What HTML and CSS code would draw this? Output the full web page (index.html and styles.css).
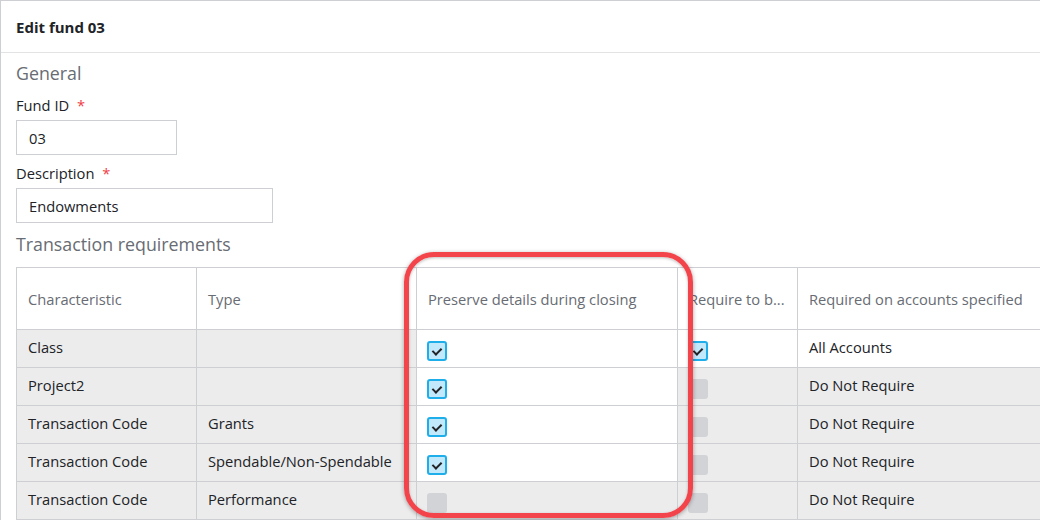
FILE: index.html
```html
<!DOCTYPE html>
<html lang="en">
<head>
  <meta charset="UTF-8">
  <title>Edit fund 03</title>
  <link rel="stylesheet" href="styles.css">
</head>
<body>
  <div class="modal">
    <div class="modal-header">Edit fund 03</div>
    <div class="modal-body">
      <h2 class="section-title first">General</h2>
      <label class="field-label">Fund ID <span class="req">*</span></label>
      <input class="field-input small" type="text" value="03">
      <label class="field-label">Description <span class="req">*</span></label>
      <input class="field-input wide" type="text" value="Endowments">
      <h2 class="section-title">Transaction requirements</h2>

      <div class="grid-wrap">
        <table class="grid">
          <colgroup>
            <col style="width:180px">
            <col style="width:220px">
            <col style="width:261px">
            <col style="width:120px">
            <col style="width:300px">
          </colgroup>
          <thead>
            <tr>
              <th>Characteristic</th>
              <th>Type</th>
              <th>Preserve details during closing</th>
              <th>Require to b...</th>
              <th>Required on accounts specified</th>
            </tr>
          </thead>
          <tbody>
            <tr>
              <td>Class</td>
              <td></td>
              <td class="edit"><span class="check on"></span></td>
              <td class="edit"><span class="check on"></span></td>
              <td class="edit">All Accounts</td>
            </tr>
            <tr>
              <td>Project2</td>
              <td></td>
              <td class="edit"><span class="check on"></span></td>
              <td><span class="check off"></span></td>
              <td>Do Not Require</td>
            </tr>
            <tr>
              <td>Transaction Code</td>
              <td>Grants</td>
              <td class="edit"><span class="check on"></span></td>
              <td><span class="check off"></span></td>
              <td>Do Not Require</td>
            </tr>
            <tr>
              <td>Transaction Code</td>
              <td>Spendable/Non-Spendable</td>
              <td class="edit"><span class="check on"></span></td>
              <td><span class="check off"></span></td>
              <td>Do Not Require</td>
            </tr>
            <tr>
              <td>Transaction Code</td>
              <td>Performance</td>
              <td><span class="check off"></span></td>
              <td><span class="check off"></span></td>
              <td>Do Not Require</td>
            </tr>
          </tbody>
        </table>
        <div class="highlight"></div>
      </div>
    </div>
  </div>
</body>
</html>
```

FILE: styles.css
```css
body {
  margin: 0;
  padding: 0;
  font-family: "Open Sans", Arial, sans-serif;
  color: #212327;
  background: #fff;
}

.modal {
  width: 1040px;
  height: 520px;
  box-sizing: border-box;
  border-left: 1px solid #cdcfd2;
  border-top: 1px solid #cdcfd2;
  overflow: hidden;
}

.modal-header {
  height: 52px;
  box-sizing: border-box;
  padding: 16px 15px 0;
  font-size: 15px;
  font-weight: 700;
  line-height: 20px;
  border-bottom: 1px solid #e2e3e4;
}

.modal-body {
  padding: 8px 0 0 15px;
}

.section-title {
  margin: 0 0 11px;
  font-size: 17.8px;
  font-weight: 400;
  color: #686c73;
  line-height: 24px;
}

.section-title.first {
  margin-bottom: 10px;
}

.field-label {
  display: block;
  font-size: 14.7px;
  line-height: 20px;
  margin-bottom: 5px;
}

.req {
  color: #ef4044;
  margin-left: 4px;
}

.field-input {
  display: block;
  box-sizing: border-box;
  height: 35px;
  border: 1px solid #cdcfd2;
  padding: 0 12px;
  font-family: inherit;
  font-size: 14.7px;
  color: #212327;
  margin-bottom: 8px;
}

.field-input.small { width: 161px; }
.field-input.wide { width: 257px; margin-bottom: 9px; }

.grid-wrap {
  position: relative;
  margin-top: 1px;
}

.grid {
  border-collapse: collapse;
  table-layout: fixed;
  width: 1081px;
  font-size: 14.7px;
}

.grid th,
.grid td {
  border: 1px solid #cdcfd2;
  text-align: left;
  padding: 0 11px;
  white-space: nowrap;
  overflow: hidden;
}

.grid th {
  height: 61px;
  font-weight: 400;
  color: #686c73;
  background: #fff;
}

.grid td {
  height: 34px;
  padding-bottom: 3px;
  background: #ececec;
}

.grid td.edit {
  background: #fff;
}

.check {
  display: block;
  width: 20px;
  height: 20px;
  box-sizing: border-box;
  border-radius: 3px;
  margin-top: 8px;
  margin-left: -1px;
}

.check.on {
  background: #c1e8fb;
  border: 2px solid #1eaee9;
  position: relative;
}

.check.on::after {
  content: "";
  position: absolute;
  left: 5px;
  top: 3px;
  width: 4px;
  height: 7px;
  border-right: 2px solid #212327;
  border-bottom: 2px solid #212327;
  transform: rotate(45deg);
}

.check.off {
  background: #d2d3d7;
}

.highlight {
  position: absolute;
  left: 388px;
  top: -15px;
  width: 279px;
  height: 256px;
  border: 5px solid #f2444a;
  border-radius: 30px;
  box-shadow: 0 1px 4px rgba(0, 0, 0, 0.35), inset 0 1px 3px rgba(0, 0, 0, 0.25);
  pointer-events: none;
}
```
